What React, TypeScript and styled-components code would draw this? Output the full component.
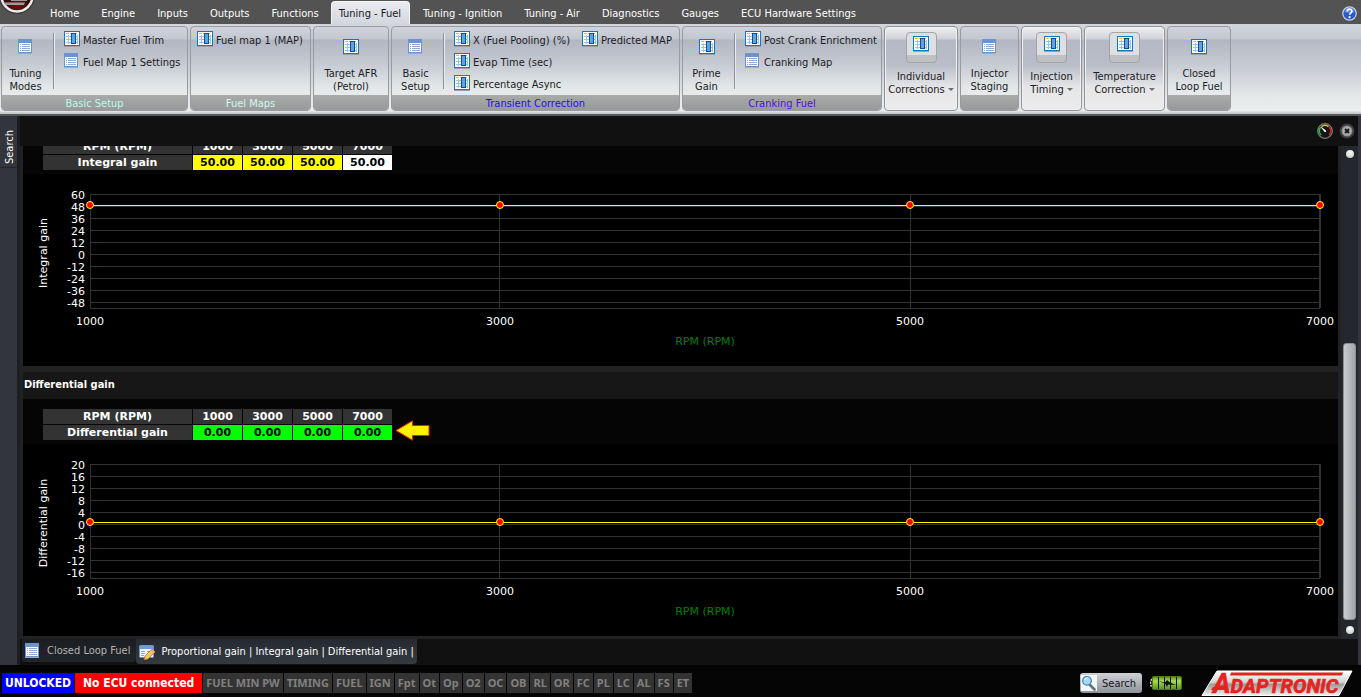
import React from "react";
import styled, { createGlobalStyle, css } from "styled-components";

const UI = `"DejaVu Sans Condensed", "DejaVu Sans", sans-serif`;
const WIDE = `"DejaVu Sans", sans-serif`;

const GlobalStyle = createGlobalStyle`
  *, *::before, *::after { box-sizing: border-box; }
  body { margin: 0; background: #050505; font-family: ${UI}; font-size: 11px; line-height: 13px; color: #fff; }
  button { font: inherit; color: inherit; background: none; border: 0; padding: 0; margin: 0; cursor: pointer; }
  a { color: inherit; text-decoration: none; }
  svg { display: block; flex: none; }
`;

const Shell = styled.div`
  display: flex;
  flex-direction: column;
  height: 100vh;
  min-height: 480px;
  overflow: hidden;
`;

/* ---------- top menu ---------- */

const MenuBar = styled.header`
  position: relative;
  display: flex;
  align-items: stretch;
  height: 24px;
  padding: 2px 4px 0 39px;
  background: #535353;
`;

const Orb = styled.button`
  position: absolute;
  left: 0;
  top: 0;
`;

const MenuTabs = styled.nav`
  display: flex;
  flex: 1;
`;

const MenuTab = styled.a<{ $active?: boolean }>`
  display: flex;
  align-items: center;
  padding: 0 11px;
  white-space: nowrap;
  ${(p) =>
    p.$active &&
    css`
      padding: 0 8px 0 7px;
      margin: -1px 2px 0 1px;
      color: #16161c;
      background: linear-gradient(#e9ebf0, #d3d6dd);
      border: 1px solid #f4f6f8;
      border-bottom: 0;
      border-radius: 4px 4px 0 0;
    `}
`;

/* ---------- ribbon ---------- */

const Ribbon = styled.div`
  display: flex;
  flex: none;
  gap: 2px;
  height: 90px;
  padding: 2px 0 3px 1px;
  color: #1c1c24;
  background: linear-gradient(#d3d6dd 0, #c5c9d1 15px, #b4b9c4 16px, #c9cdd4 45px, #e4e8e8 72px, #eceeee 87px, #d0d2d4 88px, #c4c6c8 90px);
`;

const Group = styled.section<{ $width: number; $menu?: boolean }>`
  display: flex;
  flex-direction: column;
  flex: 0 0 ${(p) => p.$width}px;
  border: 1px solid #999ba0;
  border-radius: 4px;
  overflow: hidden;
  background: linear-gradient(#d0d3db 0, #c3c7d0 12px, #b1b6c2 13px, #c5c9d1 36px, #e2e7e8 60px, #e8ebeb 68px);
  ${(p) =>
    p.$menu &&
    css`
      border-color: #909297;
      box-shadow: inset 0 0 0 1px #f1f1f3;
      background: linear-gradient(#f0f0f2 0, #cfd1d6 12px, #b5b9c3 13px, #b9bdc7 38px, #e6e6e8 60px, #ececec 84px);
    `}
`;

const GroupBody = styled.div`
  display: flex;
  flex: 1;
  min-height: 0;
`;

const GroupLabel = styled.footer<{ $color?: string }>`
  height: 15px;
  line-height: 17px;
  text-align: center;
  color: ${(p) => p.$color};
  background: linear-gradient(#a9abab, #989a9a);
`;

const BigButton = styled.button<{ $fill?: boolean; $menu?: boolean }>`
  display: flex;
  flex-direction: column;
  align-items: center;
  flex: ${(p) => (p.$fill ? "1" : "0 0 47px")};
  gap: ${(p) => (p.$menu ? 7 : 12)}px;
  padding-top: ${(p) => (p.$menu ? 5 : 12)}px;
  line-height: 13px;
  white-space: nowrap;
`;

const IconTile = styled.span`
  display: flex;
  justify-content: center;
  width: 31px;
  height: 31px;
  padding-top: 3px;
  border: 1px solid #a2a4a8;
  border-radius: 4px;
  background: linear-gradient(#dedfe2 0 22px, #bfc0c1 22px);
`;

const Divider = styled.span`
  width: 2px;
  height: 56px;
  margin: 6px 9px 0 4px;
  border-left: 1px solid #8e9096;
  border-right: 1px solid #e9ebee;
`;

const Items = styled.div<{ $lead?: boolean }>`
  display: flex;
  flex-direction: column;
  gap: 6px;
  padding-top: 4px;
  margin-left: ${(p) => (p.$lead ? 6 : 0)}px;
  margin-right: 12px;
`;

const ItemButton = styled.button`
  display: flex;
  align-items: center;
  gap: 3px;
  height: 16px;
  white-space: nowrap;
`;

const ItemText = styled.span`
  padding-top: 2px;
`;

const Caret = styled.span`
  display: inline-block;
  margin: 0 0 2px 3px;
  border: 3px solid transparent;
  border-top-color: #6c6e74;
  border-bottom: 0;
`;

/* ---------- workspace ---------- */

const Workspace = styled.div`
  display: flex;
  flex: 1;
  min-height: 0;
  border-top: 2px solid #57585a;
`;

const SidePanel = styled.aside`
  flex: 0 0 20px;
  border-right: 3px solid #1c1e21;
  background: #32353b;
`;

const SideTab = styled.button`
  width: 17px;
  height: 52px;
  padding: 0 3px 11px 0;
  border-top: 1px solid #22252a;
  writing-mode: vertical-rl;
  transform: rotate(180deg);
  text-align: center;
  line-height: 14px;
`;

const Main = styled.main`
  display: flex;
  flex-direction: column;
  flex: 1;
  min-width: 0;
  background: #111;
`;

const PanelHead = styled.div`
  display: flex;
  align-items: center;
  justify-content: flex-end;
  flex: none;
  gap: 6px;
  height: 30px;
  padding-right: 3px;
`;

const PanelBody = styled.div`
  display: flex;
  flex: 1;
  min-height: 0;
`;

const Viewport = styled.div`
  display: flex;
  flex-direction: column;
  justify-content: flex-end;
  flex: 1;
  min-width: 0;
  overflow: hidden;
  border: 3px solid #222;
  border-top: 0;
  background: #000;
`;

const Section = styled.section`
  flex: none;
  & + & { border-top: 6px solid #222; }
`;

const SectionTitle = styled.h2`
  margin: 0;
  padding-left: 1px;
  font-size: 11px;
  line-height: 25px;
  height: 27px;
  background: #171717;
`;

const TableArea = styled.div`
  display: flex;
  align-items: flex-start;
  gap: 2px;
  height: 45px;
  padding: 9px 0 0 19px;
  background: #050505;
`;

const GainTable = styled.table`
  border-collapse: separate;
  border-spacing: 1px;
  table-layout: fixed;
  width: 351px;
  font: bold 11px/15px ${WIDE};
  text-align: center;
`;

const HeadCell = styled.th<{ $label?: boolean }>`
  width: ${(p) => (p.$label ? 149 : 49)}px;
  height: 15px;
  padding: 0;
  background: #333;
`;

const ValueCell = styled.td<{ $fill: string }>`
  height: 15px;
  padding: 0;
  color: #000;
  background: ${(p) => p.$fill};
`;

const ArrowSlot = styled.span`
  padding-top: 12px;
`;

const ChartSvg = styled.svg`
  width: 100%;
  height: 192px;
  font: 11px ${WIDE};
  fill: #fff;
`;

const Plot = styled.svg`
  width: calc(100% - 85px);
  overflow: visible;
`;

const ScrollRail = styled.div`
  display: flex;
  flex-direction: column;
  align-items: center;
  flex: 0 0 17px;
  padding: 4px 0 5px;
  background: #24282c;
`;

const ScrollDot = styled.button`
  flex: none;
  width: 8px;
  height: 8px;
  border-radius: 50%;
  background: radial-gradient(circle at 50% 30%, #fff, #bdbdbd);
`;

const ScrollGap = styled.span`
  flex: 186 1 0;
`;

const ScrollThumb = styled.span`
  flex: 276 1 0;
  width: 13px;
  margin-bottom: 6px;
  border: 1px solid #8b8f94;
  border-radius: 3px;
  background: linear-gradient(90deg, #c9cbce, #a2a6ab);
`;

const RightEdge = styled.div`
  flex: 0 0 3px;
  background: #32353b;
`;

const DocTabs = styled.div`
  display: flex;
  flex: none;
  height: 26px;
  padding-left: 2px;
`;

const DocTab = styled.button<{ $active?: boolean }>`
  display: flex;
  align-items: center;
  gap: 6px;
  height: ${(p) => (p.$active ? 25 : 23)}px;
  padding: 0 ${(p) => (p.$active ? 3 : 6)}px 0 3px;
  white-space: nowrap;
  color: ${(p) => (p.$active ? "#fff" : "#b4b4b4")};
  border-radius: 0 0 4px 4px;
  background: ${(p) => (p.$active ? "linear-gradient(#262a30, #353a41)" : "linear-gradient(#1a1d22, #22262b)")};
`;

/* ---------- status bar ---------- */

const StatusBar = styled.footer`
  display: flex;
  align-items: center;
  flex: none;
  gap: 1px;
  height: 32px;
  padding: 4px 8px 0 2px;
  background: #050505;
`;

const Badge = styled.span<{ $fill: string; $pad: number }>`
  height: 20px;
  padding: 0 ${(p) => p.$pad}px;
  font-size: 12px;
  font-weight: bold;
  line-height: 20px;
  white-space: nowrap;
  background: ${(p) => p.$fill};
`;

const Flag = styled.span`
  height: 20px;
  padding: 0 3px;
  font-family: "Noto Sans", ${UI};
  font-weight: bold;
  line-height: 20px;
  white-space: nowrap;
  color: #808080;
  background: #333;
`;

const StatusRight = styled.div`
  display: flex;
  align-items: center;
  gap: 8px;
  margin-left: auto;
`;

const SearchButton = styled.button`
  display: flex;
  align-items: center;
  gap: 5px;
  width: 62px;
  height: 20px;
  padding: 1px;
  color: #16161c;
  border-radius: 3px;
  background: linear-gradient(#cfd1d4, #8f939b);
`;

const LogoLink = styled.a`
  margin-left: 11px;
`;

/* ---------- drawings ---------- */

const TableIcon = () => (
  <svg width="16" height="16" viewBox="0 0 16 16" shapeRendering="crispEdges">
    <rect width="16" height="15" fill="#0a7cbd" />
    <rect y="15" width="16" height="1" fill="#9ba0aa" />
    <rect x="1" y="1" width="14" height="13" fill="#fff" />
    <path d="M2 2.500h12" stroke="#fbb51e" strokeWidth="1" strokeDasharray="3 1" />
    <path d="M2 5.500h12M2 8.500h12M2 11.500h12M4.500 4v9M13.500 4v9" stroke="#9cc3e3" strokeWidth="1" />
    <rect x="7" y="2" width="5" height="11" fill="#0a4f9e" />
    <rect x="8" y="3" width="3" height="9" fill="#5fa4dc" />
  </svg>
);

const ListIcon = () => (
  <svg width="16" height="16" viewBox="0 0 16 16" shapeRendering="crispEdges">
    <rect width="14" height="14" fill="#6b93cd" />
    <rect y="14" width="14" height="1" fill="#a3a9b5" />
    <rect x="1" y="4" width="12" height="9" fill="#fafcff" />
    <path d="M2 5.500h1M2 7.500h1M2 9.500h1M2 11.500h1M4 5.500h8M4 7.500h8M4 9.500h8M4 11.500h8" stroke="#8ea9d6" />
  </svg>
);

const EditFormIcon = () => (
  <svg width="16" height="16" viewBox="0 0 16 16">
    <rect x="0.500" y="1.500" width="14" height="12" rx="1" fill="#f2f6fc" stroke="#6b93cd" />
    <rect x="1" y="2" width="13" height="3" fill="#6b9be0" />
    <path d="M2 7.500h4M2 9.500h4M2 11.500h3M8 7.500h4" stroke="#8aa6d0" />
    <path d="M13 5l3 3-7 7-4 1 1-4z" fill="#f7c560" stroke="#a9742c" strokeWidth=".8" />
    <path d="M13 5l3 3-1.500 1.500-3-3z" fill="#f7a98a" />
  </svg>
);

const OrbIcon = () => (
  <svg width="36" height="15" viewBox="0 0 36 15">
    <defs>
      <radialGradient id="orb" cx=".5" cy=".8" r=".6">
        <stop offset="0" stopColor="#6b1410" />
        <stop offset="1" stopColor="#1a0808" />
      </radialGradient>
    </defs>
    <circle cx="17" cy="-4" r="18" fill="#3c3c3c" />
    <circle cx="17" cy="-4" r="15.500" fill="url(#orb)" stroke="#ededed" strokeWidth="2.500" />
    <path d="M3 2.500h22l-1 2.500H6zM11 0h16v1H11z" fill="#9a9a9a" />
  </svg>
);

const HelpIcon = () => (
  <svg width="15" height="15" viewBox="0 0 15 15">
    <circle cx="7.500" cy="7.500" r="6.700" fill="#2a58c8" stroke="#c6d2ee" strokeWidth="1.200" />
    <path d="M2.500 6a5 4.500 0 0 1 10 0q-5 2-10 0z" fill="#6d95e6" opacity=".7" />
    <path d="M5.200 5.500c0-3.200 4.700-3 4.700-.3 0 1.700-2.200 1.700-2.200 3.600" fill="none" stroke="#fff" strokeWidth="1.700" />
    <circle cx="7.600" cy="11.200" r="1.100" fill="#fff" />
  </svg>
);

const GaugeIcon = () => (
  <svg width="16" height="16" viewBox="0 0 16 16">
    <circle cx="8" cy="8" r="7.300" fill="#151515" stroke="#7d7d7d" strokeWidth="1.300" />
    <path d="M4 12A5.500 5.500 0 0 1 4 4" fill="none" stroke="#1fc04a" strokeWidth="1.500" />
    <path d="M4.500 3.700A5.500 5.500 0 0 1 11.500 3.700" fill="none" stroke="#d7c81a" strokeWidth="1.500" />
    <path d="M12 4A5.500 5.500 0 0 1 12 12" fill="none" stroke="#d82020" strokeWidth="1.500" />
    <path d="M4.500 4.500L9 8 8 9z" fill="#fff" stroke="#fff" strokeWidth=".8" />
  </svg>
);

const CloseIcon = () => (
  <svg width="16" height="16" viewBox="0 0 16 16">
    <circle cx="8" cy="8" r="6.500" fill="#8c8c8c" stroke="#3d3d3d" strokeWidth="2" />
    <circle cx="8" cy="8" r="4.500" fill="#aaa" />
    <path d="M6 6l4 4M10 6l-4 4" stroke="#161616" strokeWidth="1.800" />
  </svg>
);

const LensIcon = () => (
  <svg width="16" height="16" viewBox="0 0 16 16">
    <rect width="16" height="16" fill="#f4f5f6" />
    <path d="M8.500 9.500l5 5" stroke="#6b7078" strokeWidth="2.600" strokeLinecap="round" />
    <circle cx="6" cy="5.800" r="4.300" fill="#a8d8f8" stroke="#3d7fc0" strokeWidth="1.200" />
    <path d="M3.500 5a3 3 0 0 1 3-2" fill="none" stroke="#fff" strokeWidth="1.200" />
  </svg>
);

const BatteryIcon = () => (
  <svg width="32" height="14" viewBox="0 0 32 14">
    <defs>
      <linearGradient id="cell" x2="0" y2="1">
        <stop offset="0" stopColor="#5d8a1c" />
        <stop offset=".35" stopColor="#a6dc50" />
        <stop offset="1" stopColor="#5c8f1a" />
      </linearGradient>
    </defs>
    <path d="M2 3q-1.500 1.500-1.500 4t1.500 4" fill="none" stroke="#d5d5d5" strokeWidth="1.600" strokeDasharray="2 1" />
    <rect x="2.500" y=".5" width="29" height="13" rx="1" fill="url(#cell)" stroke="#4d7517" />
    <path d="M8.500 1v12M14.500 1v12M20.500 1v12M26.500 1v12" stroke="#0c1404" />
    <path d="M8 5l7 1.500 2-2.500 3 2.500 6 2.500-8-.5-1 2.500-2-3.500z" fill="#0c1404" />
  </svg>
);

const ArrowDrawing = () => (
  <svg width="35" height="21" viewBox="0 0 35 21">
    <path d="M1 10.500L17.500 .8V5.500H34V15.500H17.500V20.200z" fill="#fff200" stroke="#ed1c24" />
  </svg>
);

const BrandLogo = () => (
  <svg width="152" height="27" viewBox="0 0 152 27">
    <defs>
      <linearGradient id="plate" x2="0" y2="1">
        <stop offset="0" stopColor="#fff" />
        <stop offset=".45" stopColor="#d5d5d5" />
        <stop offset=".55" stopColor="#9c9c9c" />
        <stop offset="1" stopColor="#f2f2f2" />
      </linearGradient>
    </defs>
    <path d="M16 1H151L138 25.500H1z" fill="url(#plate)" stroke="#fff" />
    <path d="M30 2.500H142l-1 3H29z" fill="#e3241f" />
    <path d="M12 17h14l-1 3H10z" fill="#e3241f" />
    <g fill="#e3241f" stroke="#e3241f" strokeWidth=".6" fontFamily="Roboto, sans-serif" fontStyle="italic" fontWeight="bold">
      <text x="12" y="23">
        <tspan fontSize="27">A</tspan>
        <tspan fontSize="20">DAPTRONIC</tspan>
      </text>
    </g>
  </svg>
);

/* ---------- chart ---------- */

type ChartProps = { title: string; top: number; step: number; valueY: number };

const Chart = ({ title, top, step, valueY }: ChartProps) => {
  const rows = Array.from({ length: 10 }, (_, i) => i);
  const stops = ["0%", "33.333%", "66.667%", "100%"];
  const rpm = [1000, 3000, 5000, 7000];
  return (
    <ChartSvg role="img" aria-label={title}>
      <text transform="translate(24 79) rotate(-90)" textAnchor="middle">{title}</text>
      {rows.map((i) => (
        <text key={i} x="62" y={25 + i * 12} textAnchor="end">{top - i * step}</text>
      ))}
      <Plot x="67">
        <g stroke="#333" shapeRendering="crispEdges">
          {rows.map((i) => (
            <line key={i} x1="0" x2="100%" y1={20 + i * 12} y2={20 + i * 12} />
          ))}
          <line x1="0" x2="100%" y1="134" y2="134" />
          {stops.map((x) => (
            <line key={x} x1={x} x2={x} y1="20" y2="134" strokeWidth={x === "100%" ? 2 : 1} />
          ))}
        </g>
        <line x1="0" x2="100%" y1={valueY} y2={valueY} stroke="#ff0" shapeRendering="crispEdges" />
        {stops.map((x, i) => (
          <g key={x}>
            <circle cx={x} cy={valueY} r="3.500" fill="#f00" stroke="#ff0" />
            <text x={x} y="151" textAnchor="middle">{rpm[i]}</text>
          </g>
        ))}
        <text x="50%" y="171" textAnchor="middle" fill="#008000">RPM (RPM)</text>
      </Plot>
    </ChartSvg>
  );
};

/* ---------- data ---------- */

const menu = [
  "Home", "Engine", "Inputs", "Outputs", "Functions", "Tuning - Fuel", "Tuning - Ignition",
  "Tuning - Air", "Diagnostics", "Gauges", "ECU Hardware Settings",
];

const flags = [
  "FUEL MIN PW", "TIMING", "FUEL", "IGN", "Fpt", "Ot", "Op", "O2", "OC", "OB", "RL", "OR",
  "FC", "PL", "LC", "AL", "FS", "ET",
];

type Gain = {
  name: string;
  heading?: boolean;
  values: string[];
  fills: string[];
  arrow?: boolean;
  top: number;
  step: number;
  valueY: number;
};

const gains: Gain[] = [
  { name: "Integral gain", values: ["50.00", "50.00", "50.00", "50.00"], fills: ["#ff0", "#ff0", "#ff0", "#fff"], top: 60, step: 12, valueY: 31 },
  { name: "Differential gain", heading: true, values: ["0.00", "0.00", "0.00", "0.00"], fills: ["#0f0", "#0f0", "#0f0", "#0f0"], arrow: true, top: 20, step: 4, valueY: 78 },
];

const Big = ({ icon, lines, fill }: { icon: "table" | "list"; lines: [string, string]; fill?: boolean }) => (
  <BigButton $fill={fill}>
    {icon === "table" ? <TableIcon /> : <ListIcon />}
    <span>{lines[0]}<br />{lines[1]}</span>
  </BigButton>
);

const MenuGroup = ({ width, lines }: { width: number; lines: [string, string] }) => (
  <Group $width={width} $menu>
    <BigButton $fill $menu>
      <IconTile><TableIcon /></IconTile>
      <span>{lines[0]}<br />{lines[1]}<Caret /></span>
    </BigButton>
  </Group>
);

const Item = ({ icon, text }: { icon: "table" | "list"; text: string }) => (
  <ItemButton>
    {icon === "table" ? <TableIcon /> : <ListIcon />}
    <ItemText>{text}</ItemText>
  </ItemButton>
);

export default function App() {
  return (
    <Shell>
      <GlobalStyle />
      <MenuBar>
        <Orb aria-label="Application menu"><OrbIcon /></Orb>
        <MenuTabs>
          {menu.map((m) => (
            <MenuTab key={m} href="#" $active={m === "Tuning - Fuel"}>{m}</MenuTab>
          ))}
        </MenuTabs>
        <button aria-label="Help"><HelpIcon /></button>
      </MenuBar>

      <Ribbon>
        <Group $width={187}>
          <GroupBody>
            <Big icon="list" lines={["Tuning", "Modes"]} />
            <Divider />
            <Items>
              <Item icon="table" text="Master Fuel Trim" />
              <Item icon="list" text="Fuel Map 1 Settings" />
            </Items>
          </GroupBody>
          <GroupLabel $color="#b4fbe8">Basic Setup</GroupLabel>
        </Group>
        <Group $width={121}>
          <GroupBody>
            <Items $lead><Item icon="table" text="Fuel map 1 (MAP)" /></Items>
          </GroupBody>
          <GroupLabel $color="#d2f7ea">Fuel Maps</GroupLabel>
        </Group>
        <Group $width={76}>
          <GroupBody><Big fill icon="table" lines={["Target AFR", "(Petrol)"]} /></GroupBody>
          <GroupLabel />
        </Group>
        <Group $width={289}>
          <GroupBody>
            <Big icon="list" lines={["Basic", "Setup"]} />
            <Divider />
            <Items>
              <Item icon="table" text="X (Fuel Pooling) (%)" />
              <Item icon="table" text="Evap Time (sec)" />
              <Item icon="table" text="Percentage Async" />
            </Items>
            <Items><Item icon="table" text="Predicted MAP" /></Items>
          </GroupBody>
          <GroupLabel $color="#2410e0">Transient Correction</GroupLabel>
        </Group>
        <Group $width={200}>
          <GroupBody>
            <Big icon="table" lines={["Prime", "Gain"]} />
            <Divider />
            <Items>
              <Item icon="table" text="Post Crank Enrichment" />
              <Item icon="list" text="Cranking Map" />
            </Items>
          </GroupBody>
          <GroupLabel $color="#4a10e0">Cranking Fuel</GroupLabel>
        </Group>
        <MenuGroup width={74} lines={["Individual", "Corrections"]} />
        <Group $width={59}>
          <GroupBody><Big fill icon="list" lines={["Injector", "Staging"]} /></GroupBody>
          <GroupLabel />
        </Group>
        <MenuGroup width={61} lines={["Injection", "Timing"]} />
        <MenuGroup width={81} lines={["Temperature", "Correction"]} />
        <Group $width={64}>
          <GroupBody><Big fill icon="table" lines={["Closed", "Loop Fuel"]} /></GroupBody>
          <GroupLabel />
        </Group>
      </Ribbon>

      <Workspace>
        <SidePanel><SideTab>Search</SideTab></SidePanel>
        <Main>
          <PanelHead>
            <button aria-label="Gauges"><GaugeIcon /></button>
            <button aria-label="Close"><CloseIcon /></button>
          </PanelHead>
          <PanelBody>
            <Viewport>
              {gains.map((g) => (
                <Section key={g.name}>
                  {g.heading && <SectionTitle>{g.name}</SectionTitle>}
                  <TableArea>
                    <GainTable>
                      <thead>
                        <tr>
                          <HeadCell $label>RPM (RPM)</HeadCell>
                          {[1000, 3000, 5000, 7000].map((r) => <HeadCell key={r}>{r}</HeadCell>)}
                        </tr>
                      </thead>
                      <tbody>
                        <tr>
                          <HeadCell $label>{g.name}</HeadCell>
                          {g.values.map((v, i) => <ValueCell key={i} $fill={g.fills[i]}>{v}</ValueCell>)}
                        </tr>
                      </tbody>
                    </GainTable>
                    {g.arrow && <ArrowSlot><ArrowDrawing /></ArrowSlot>}
                  </TableArea>
                  <Chart title={g.name} top={g.top} step={g.step} valueY={g.valueY} />
                </Section>
              ))}
            </Viewport>
            <ScrollRail>
              <ScrollDot aria-label="Scroll up" />
              <ScrollGap />
              <ScrollThumb />
              <ScrollDot aria-label="Scroll down" />
            </ScrollRail>
          </PanelBody>
          <DocTabs>
            <DocTab><ListIcon />Closed Loop Fuel</DocTab>
            <DocTab $active><EditFormIcon />Proportional gain | Integral gain | Differential gain |</DocTab>
          </DocTabs>
        </Main>
        <RightEdge />
      </Workspace>

      <StatusBar>
        <Badge $fill="#00f" $pad={3}>UNLOCKED</Badge>
        <Badge $fill="#f00" $pad={8}>No ECU connected</Badge>
        {flags.map((f) => <Flag key={f}>{f}</Flag>)}
        <StatusRight>
          <SearchButton><LensIcon />Search</SearchButton>
          <BatteryIcon />
          <LogoLink href="#" aria-label="Adaptronic"><BrandLogo /></LogoLink>
        </StatusRight>
      </StatusBar>
    </Shell>
  );
}
